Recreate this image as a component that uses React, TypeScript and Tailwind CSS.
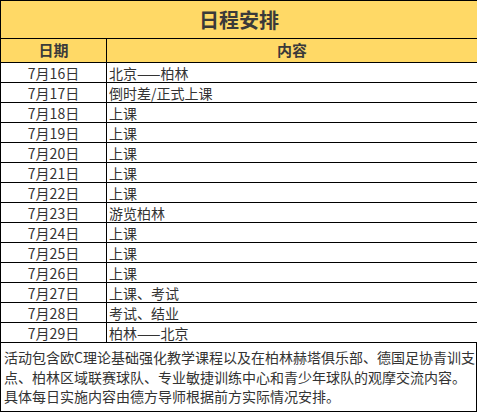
import React from "react";

const rows: [string, string][] = [
  ["7月16日", "北京——柏林"],
  ["7月17日", "倒时差/正式上课"],
  ["7月18日", "上课"],
  ["7月19日", "上课"],
  ["7月20日", "上课"],
  ["7月21日", "上课"],
  ["7月22日", "上课"],
  ["7月23日", "游览柏林"],
  ["7月24日", "上课"],
  ["7月25日", "上课"],
  ["7月26日", "上课"],
  ["7月27日", "上课、考试"],
  ["7月28日", "考试、结业"],
  ["7月29日", "柏林——北京"],
];

export default function App() {
  return (
    <div
      className="w-[477px] h-[414px] bg-white text-[#333333]"
      style={{ fontFamily: '"Noto Sans CJK SC", "Noto Sans", sans-serif' }}
    >
      <div className="border-l border-black">
        <div className="h-[39px] border-t border-b border-black bg-[#FFD966] flex items-center justify-center text-[20px] font-bold text-[#3a3a3a]">
          日程安排
        </div>
        <div className="h-[24px] border-b border-black bg-[#FFD966] flex text-[15px] font-bold text-[#3a3a3a]">
          <div className="w-[106px] border-r border-black flex items-center justify-center">日期</div>
          <div className="flex-1 flex items-center justify-center">内容</div>
        </div>
        {rows.map(([d, c]) => (
          <div key={d} className="h-[20px] border-b border-black flex text-[14px] leading-none">
            <div className="w-[106px] border-r border-black flex items-center justify-center">{d}</div>
            <div className="flex-1 flex items-center pl-[2px]">{c}</div>
          </div>
        ))}
        <div className="h-[69px] border-b border-r border-black text-[14px] leading-[19.5px] pt-[5px] pl-[3px] pr-[1px]">
          活动包含欧C理论基础强化教学课程以及在柏林赫塔俱乐部、德国足协青训支点、柏林区域联赛球队、专业敏捷训练中心和青少年球队的观摩交流内容。具体每日实施内容由德方导师根据前方实际情况安排。
        </div>
      </div>
    </div>
  );
}
